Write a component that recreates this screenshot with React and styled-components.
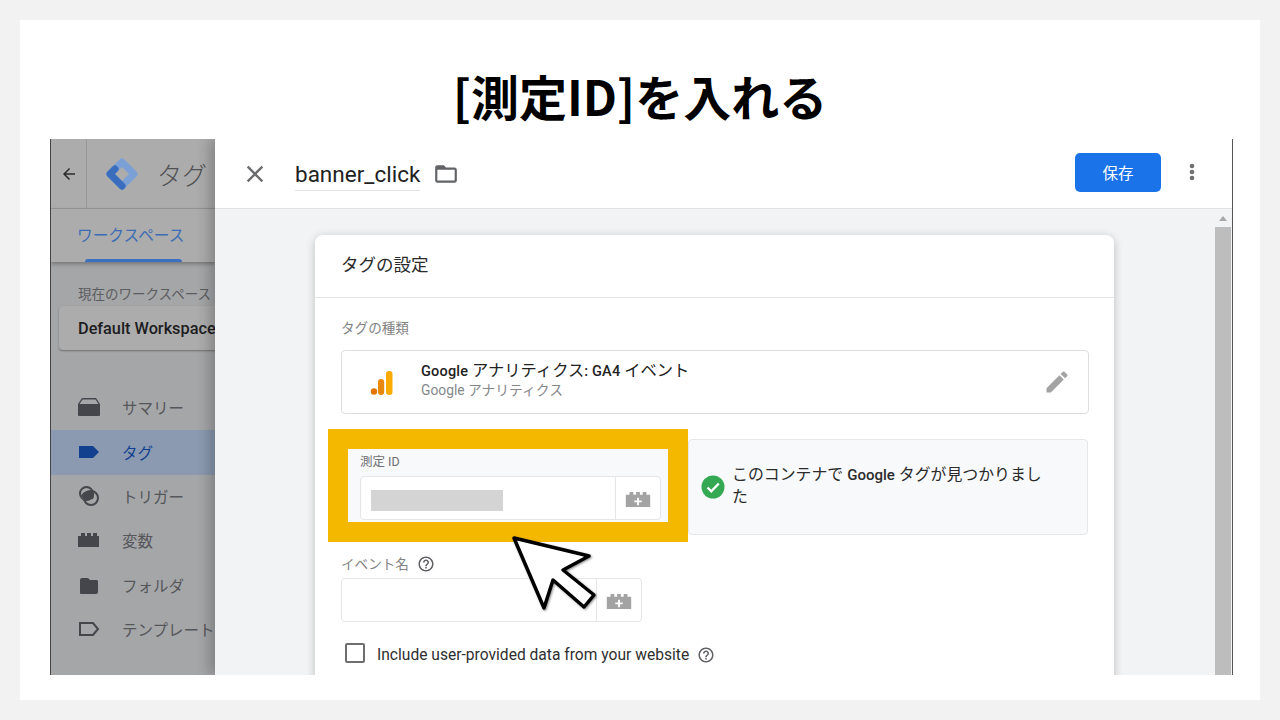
import React from "react";
import styled, { createGlobalStyle } from "styled-components";

const JP = `Roboto, "Noto Sans CJK JP", "Liberation Sans", sans-serif`;

const Global = createGlobalStyle`
  html, body { margin: 0; padding: 0; background: #f2f2f2; }
  * { box-sizing: border-box; }
`;
const Page = styled.div`
  width: 1280px; height: 720px; padding: 20px; overflow: hidden; font-family: ${JP};
`;
const Slide = styled.div`
  width: 1240px; height: 680px; background: #fff; display: flex; flex-direction: column;
`;
const Title = styled.h1`
  margin: 0; height: 119px; padding-top: 51px; text-align: center;
  font: 700 48px/1 "Noto Sans CJK JP", sans-serif; color: #000;
`;
const Shot = styled.div`
  position: relative; width: 1183px; height: 536px; margin-left: 30px; display: flex; overflow: hidden;
  border-left: 1px solid #444; border-right: 1px solid #555;
`;
const Side = styled.aside`
  width: 164px; flex: none; background: #a5a6a8; display: flex; flex-direction: column; overflow: hidden;
`;
const SideTop = styled.div`
  height: 70px; flex: none; display: flex; align-items: center; background: #acacac;
  border-bottom: 1px solid #979797; white-space: nowrap;
`;
const BackCell = styled.div`
  width: 36px; height: 100%; flex: none; display: flex; align-items: center; justify-content: center;
  border-right: 1px solid #989898;
`;
const LogoIcon = styled.svg`
  width: 36px; height: 36px; margin-left: 17px; flex: none;
`;
const AppName = styled.span`
  margin-left: 17px; font-size: 25px; font-weight: 300; color: #4f5052;
`;
const Tabs = styled.div`
  height: 53px; flex: none; background: #acacac; padding: 14px 0 0 26px; position: relative;
  box-shadow: 0 2px 4px rgba(0,0,0,.3); white-space: nowrap;
`;
const TabLabel = styled.div`
  font-size: 15.7px; line-height: 26px; color: #3d6cb4;
`;
const TabBar = styled.div`
  position: absolute; left: 34px; bottom: 0; width: 97px; height: 3px; background: #3b6fc0; border-radius: 3px 3px 0 0;
`;
const WsLabel = styled.div`
  margin: 23px 0 0 27px; font-size: 13.5px; line-height: 18px; color: #5b5c5e; white-space: nowrap;
`;
const WsBox = styled.div`
  margin: 3px -20px 0 8px; height: 44px; flex: none; padding-left: 19px; display: flex; align-items: center;
  background: #acacac; border-radius: 4px; box-shadow: 0 1px 2px rgba(0,0,0,.35);
  font-size: 16.3px; font-weight: 500; color: #1d1d1f; white-space: nowrap;
`;
const Nav = styled.nav`
  margin-top: 36px; display: flex; flex-direction: column;
`;
const NavRow = styled.div`
  height: 44.4px; display: flex; align-items: center; padding: 0 0 2px 27px; gap: 22px; white-space: nowrap;
  font-size: 15.5px; color: ${p => (p.$active ? "#12408f" : "#55565a")};
  background: ${p => (p.$active ? "#8b9ab0" : "transparent")};
`;
const NavIcon = styled.svg`
  width: 22px; height: 22px; flex: none; display: block;
`;
const Main = styled.main`
  position: relative; flex: 1; min-width: 0; display: flex; flex-direction: column; background: #fff;
  box-shadow: -6px 0 12px rgba(0,0,0,.22);
`;
const Head = styled.header`
  height: 70px; flex: none; display: flex; align-items: center; padding: 0 28px 0 26px; background: #fff;
  border-bottom: 1px solid #e0e2e4;
`;
const CloseIcon = styled.svg`
  width: 28px; height: 28px; flex: none; fill: #6b6c6e;
`;
const NameField = styled.div`
  margin-left: 26px; height: 34px; padding-top: 3px; font-size: 22.5px; line-height: 28px; color: #212121;
  border-bottom: 1px solid #e2e2e2;
`;
const FolderIcon = styled.svg`
  width: 26px; height: 26px; margin-left: 13px; fill: #616366;
`;
const Spacer = styled.div`flex: 1;`;
const SaveBtn = styled.button`
  width: 86px; height: 39px; margin-bottom: 3px; border: 0; border-radius: 5px; background: #1a73e8; color: #fff;
  font: 400 15.5px ${JP};
`;
const DotsIcon = styled.svg`
  width: 24px; height: 24px; margin: 0 0 3px 19px; fill: #6f6f6f;
`;
const Body = styled.div`
  position: relative; flex: 1; min-height: 0; display: flex; background: #f1f3f4; overflow: hidden;
`;
const Scroller = styled.div`
  flex: 1; padding: 26px 0 0 100px; min-width: 0;
`;
const Card = styled.section`
  position: relative; width: 799px; height: 460px; background: #fff; border-radius: 8px 8px 0 0;
  box-shadow: 0 2px 10px rgba(0,0,0,.22);
`;
const CardHead = styled.div`
  height: 63px; padding: 16px 0 0 26px; font-size: 17.5px; line-height: 28px; color: #2a2a2a; border-bottom: 1px solid #e3e4e6;
`;
const CardBody = styled.div`
  padding: 20px 26px 0;
`;
const SmallLabel = styled.div`
  display: flex; align-items: center; gap: 8px; font-size: 13.6px; line-height: 20px; color: #828282;
`;
const TypeBox = styled.div`
  width: 748px; height: 64px; margin-top: 12px; display: flex; align-items: center; padding: 0 17px 0 24px;
  border: 1px solid #dcdee0; border-radius: 4px; background: #fff;
`;
const BarsIcon = styled.svg`
  width: 32px; height: 32px; flex: none;
`;
const TypeText = styled.div`
  margin: 0 0 5px 23px; flex: 1;
`;
const TypeName = styled.div`
  font-size: 14.5px; line-height: 20px; font-weight: 500; color: #222; letter-spacing: .2px;
  span { font-weight: 400; font-size: 16.3px; letter-spacing: 0; }
`;
const TypeSub = styled.div`
  font-size: 13.8px; line-height: 16px; color: #85878a;
`;
const PenIcon = styled.svg`
  width: 28px; height: 28px; fill: #a3a3a3;
`;
const InfoRow = styled.div`
  margin-top: 25px; display: flex; justify-content: flex-end; width: 747px;
`;
const InfoBox = styled.div`
  width: 400px; height: 96px; display: flex; align-items: center; padding-left: 12px; gap: 7px;
  background: #f8f9fa; border: 1px solid #e6e7e9; border-radius: 4px;
`;
const CheckIcon = styled.svg`
  width: 24px; height: 24px; flex: none;
`;
const InfoText = styled.div`
  width: 320px; margin-bottom: 3px; font-size: 15.9px; line-height: 21px; color: #2b2b2b;
  b { font-weight: 500; font-size: 15px; }
`;
const EventLabel = styled(SmallLabel)`
  margin-top: 19px;
`;
const HelpIcon = styled.svg`
  width: 18px; height: 18px; flex: none; fill: #5f6064;
`;
const InputGroup = styled.div`
  width: 301px; height: 44px; display: flex; background: #fff;
  border: 1px solid #e5e6e8; border-radius: 4px;
`;
const EventGroup = styled(InputGroup)`
  margin-top: 4px;
`;
const InputArea = styled.div`
  flex: 1; display: flex; align-items: center; padding-left: 10px;
`;
const Masked = styled.div`
  width: 132px; height: 21px; margin-top: 5px; background: #d4d4d4;
`;
const VarCell = styled.div`
  width: 45px; flex: none; display: flex; align-items: center; justify-content: center; border-left: 1px solid #e5e6e8;
`;
const BlockIcon = styled.svg`
  width: 26px; height: 15px; margin-top: 3px; display: block;
`;
const CheckRow = styled.div`
  margin-top: 20px; display: flex; align-items: center; padding-left: 4px;
  font-size: 15.6px; color: #2f2f2f;
`;
const CheckBox = styled.div`
  width: 20px; height: 20px; flex: none; border: 2px solid #6e6e6e; border-radius: 2px;
`;
const CheckText = styled.span`
  margin-left: 12px; margin-right: 8px; padding-top: 4px;
`;
const HelpWrap = styled.span`
  display: flex; padding-top: 4px;
`;
const Highlight = styled.div`
  position: absolute; left: 13px; top: 194px; width: 360px; height: 113px;
  padding: 20px; background: #f5b800;
`;
const HighlightInner = styled.div`
  width: 320px; height: 73px; padding: 3px 8px 0 12px; background: #f8f9fa;
`;
const MiniLabel = styled.div`
  font-size: 12.5px; line-height: 19px; color: #6f7073;
`;
const HlGroup = styled(InputGroup)`
  margin-top: 5px;
`;
const Track = styled.div`
  width: 17px; flex: none; display: flex; flex-direction: column; align-items: flex-start; background: #f1f3f4;
`;
const Arrow = styled.div`
  margin: 7px 0 0 4px; width: 0; height: 0; border-left: 4px solid transparent; border-right: 4px solid transparent;
  border-bottom: 5px solid #a8a8a8;
`;
const Thumb = styled.div`
  margin-top: 6px; width: 16px; flex: 1; background: #bdbdbd;
`;
const Cursor = styled.svg`
  position: absolute; left: 450px; top: 380px; width: 160px; height: 110px; overflow: visible;
`;

const Block = () => (
  <BlockIcon viewBox="0 0 26 16">
    <path fill="#a3a3a3" d="M0 3h4V0h4v3h3V0h4v3h3V0h4v3h4v13H0z" />
    <path fill="#fff" d="M12 6h2v3h3v2h-3v3h-2v-3H9V9h3z" />
  </BlockIcon>
);
const Help = () => (
  <HelpIcon viewBox="0 0 24 24">
    <path d="M11 18h2v-2h-2v2zm1-16C6.48 2 2 6.48 2 12s4.48 10 10 10 10-4.48 10-10S17.52 2 12 2zm0 18c-4.41 0-8-3.59-8-8s3.59-8 8-8 8 3.59 8 8-3.59 8-8 8zm0-14c-2.21 0-4 1.79-4 4h2c0-1.1.9-2 2-2s2 .9 2 2c0 2-3 1.75-3 5h2c0-2.25 3-2.5 3-5 0-2.21-1.79-4-4-4z" />
  </HelpIcon>
);

const navItems = [
  { label: "サマリー", icon: <path fill="#45464b" d="M0 19V8l4-6h14l4 6v11a1 1 0 0 1-1 1H1a1 1 0 0 1-1-1zM1.500 8h19l-3-4.500H4.500z" /> },
  { label: "タグ", active: true, icon: <path fill="#12408f" d="M1 5h14l6 6-6 6H1z" /> },
  { label: "トリガー", icon: <g fill="none" stroke="#45464b" strokeWidth="2"><circle cx="8.500" cy="8.500" r="6.500" /><circle cx="13" cy="13" r="7" /><path fill="#45464b" stroke="none" d="M3 11c2-5 7-6 11-5 2 2 3 4 1 8-5 1-9 0-12-3z" /></g> },
  { label: "変数", icon: <path fill="#45464b" d="M0 7h3V4h4v3h2V4h4v3h2V4h4v3h2v11H0z" /> },
  { label: "フォルダ", icon: <path fill="#45464b" d="M2 6a2 2 0 0 1 2-2h6l2 2h7a2 2 0 0 1 1 1v11a2 2 0 0 1-2 2H3a1 1 0 0 1-1-1z" /> },
  { label: "テンプレート", icon: <path fill="none" stroke="#45464b" strokeWidth="2" d="M2 5h13l5 6-5 6H2z" /> },
];

export default function App() {
  return (
    <Page>
      <Global />
      <Slide>
        <Title>[測定ID]を入れる</Title>
        <Shot>
          <Side>
            <SideTop>
              <BackCell>
                <svg width="18" height="18" viewBox="0 0 24 24"><path fill="#2b2b2b" d="M20 11H7.830l5.590-5.590L12 4l-8 8 8 8 1.410-1.410L7.830 13H20z" /></svg>
              </BackCell>
              <LogoIcon viewBox="0 0 36 36">
                <path fill="none" stroke="#7aa0d6" strokeWidth="7" strokeLinejoin="round" d="M18 6l12 12-12 12L6 18z" />
                <path fill="none" stroke="#3a6dbe" strokeWidth="7" strokeLinecap="round" strokeLinejoin="round" d="M11 13L6 18l12 12" />
              </LogoIcon>
              <AppName>タグ マネージャー</AppName>
            </SideTop>
            <Tabs>
              <TabLabel>ワークスペース</TabLabel>
              <TabBar />
            </Tabs>
            <WsLabel>現在のワークスペース</WsLabel>
            <WsBox>Default Workspace</WsBox>
            <Nav>
              {navItems.map(n => (
                <NavRow key={n.label} $active={n.active}>
                  <NavIcon viewBox="0 0 22 22">{n.icon}</NavIcon>
                  {n.label}
                </NavRow>
              ))}
            </Nav>
          </Side>
          <Main>
            <Head>
              <CloseIcon viewBox="0 0 24 24"><path d="M19 6.410L17.590 5 12 10.590 6.410 5 5 6.410 10.590 12 5 17.590 6.410 19 12 13.410 17.590 19 19 17.590 13.410 12z" /></CloseIcon>
              <NameField>banner_click</NameField>
              <FolderIcon viewBox="0 0 24 24"><path d="M20 6h-8l-2-2H4c-1.100 0-1.990.9-1.990 2L2 18c0 1.100.9 2 2 2h16c1.100 0 2-.9 2-2V8c0-1.100-.9-2-2-2zm0 12H4V8h16v10z" /></FolderIcon>
              <Spacer />
              <SaveBtn>保存</SaveBtn>
              <DotsIcon viewBox="0 0 24 24"><circle cx="12" cy="6" r="2.300" /><circle cx="12" cy="12" r="2.300" /><circle cx="12" cy="18" r="2.300" /></DotsIcon>
            </Head>
            <Body>
              <Scroller>
                <Card>
                  <CardHead>タグの設定</CardHead>
                  <CardBody>
                    <SmallLabel>タグの種類</SmallLabel>
                    <TypeBox>
                      <BarsIcon viewBox="0 0 32 32">
                        <circle cx="8" cy="25.500" r="3.200" fill="#e37400" />
                        <rect x="12" y="13" width="6.200" height="16" rx="3" fill="#e8890c" />
                        <rect x="20" y="5" width="6.500" height="24" rx="3" fill="#f9ab00" />
                      </BarsIcon>
                      <TypeText>
                        <TypeName>Google <span>アナリティクス</span>: GA4 <span>イベント</span></TypeName>
                        <TypeSub>Google アナリティクス</TypeSub>
                      </TypeText>
                      <PenIcon viewBox="0 0 24 24"><path d="M3 17.250V21h3.750L17.810 9.940l-3.750-3.750L3 17.250zM20.710 7.040c.39-.39.39-1.020 0-1.410l-2.340-2.340c-.39-.39-1.020-.39-1.410 0l-1.830 1.830 3.750 3.750 1.830-1.830z" /></PenIcon>
                    </TypeBox>
                    <InfoRow>
                      <InfoBox>
                        <CheckIcon viewBox="0 0 24 24">
                          <circle cx="12" cy="12" r="11.500" fill="#34a853" />
                          <path fill="none" stroke="#fff" strokeWidth="2.400" d="M6.500 12.500l3.800 3.800 7.500-7.800" />
                        </CheckIcon>
                        <InfoText>このコンテナで <b>Google</b> タグが見つかりました</InfoText>
                      </InfoBox>
                    </InfoRow>
                    <EventLabel>イベント名 <Help /></EventLabel>
                    <EventGroup>
                      <InputArea />
                      <VarCell><Block /></VarCell>
                    </EventGroup>
                    <CheckRow>
                      <CheckBox />
                      <CheckText>Include user-provided data from your website</CheckText>
                      <HelpWrap><Help /></HelpWrap>
                    </CheckRow>
                  </CardBody>
                  <Highlight>
                    <HighlightInner>
                      <MiniLabel>測定 ID</MiniLabel>
                      <HlGroup>
                        <InputArea><Masked /></InputArea>
                        <VarCell><Block /></VarCell>
                      </HlGroup>
                    </HighlightInner>
                  </Highlight>
                </Card>
              </Scroller>
              <Track><Arrow /><Thumb /></Track>
            </Body>
          </Main>
          <Cursor viewBox="0 0 160 110">
            <defs>
              <filter id="cs" x="-20%" y="-20%" width="140%" height="140%"><feDropShadow dx="1" dy="1" stdDeviation="1" floodColor="#000" floodOpacity=".45" /></filter>
            </defs>
            <path filter="url(#cs)" fill="#fff" stroke="#000" strokeWidth="3.500" strokeLinejoin="round" d="M13 19L88 37 62 51 93 76 83 88 52 61 43 89z" />
          </Cursor>
        </Shot>
      </Slide>
    </Page>
  );
}
